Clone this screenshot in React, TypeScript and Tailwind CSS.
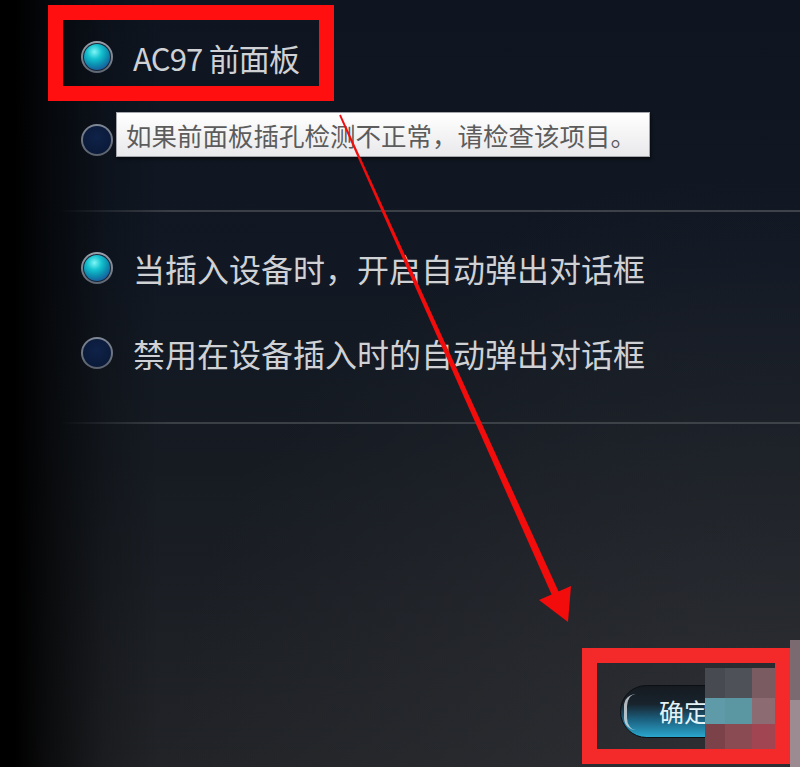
import React from "react";

const FONT = { fontFamily: '"Noto Sans CJK SC", "Noto Sans", sans-serif' };

function Radio({ checked }: { checked: boolean }) {
  if (checked) {
    return (
      <div className="w-[32px] h-[32px] rounded-full p-[2px] bg-[linear-gradient(180deg,#9aa2ad,#5d6673)] shrink-0">
        <div className="w-full h-full rounded-full p-[1px] bg-[#1a2535]">
          <div className="w-full h-full rounded-full bg-[radial-gradient(circle_at_40%_30%,#7ff7f7_0%,#14c2cf_30%,#0c8fb0_55%,#1c4e98_85%,#1b3d7a_100%)]" />
        </div>
      </div>
    );
  }
  return (
    <div className="w-[32px] h-[32px] rounded-full p-[2px] bg-[linear-gradient(180deg,#808896,#5a616c)] shrink-0">
      <div className="w-full h-full rounded-full bg-[radial-gradient(circle_at_50%_40%,#0f2248_0%,#0a1a3a_70%,#08142c_100%)]" />
    </div>
  );
}

function Row({
  checked,
  label,
  className,
  textClass,
}: {
  checked: boolean;
  label?: string;
  className?: string;
  textClass?: string;
}) {
  return (
    <div className={"flex items-center h-[40px] gap-[20px] " + (className ?? "")}>
      <Radio checked={checked} />
      {label ? (
        <span className={"leading-none text-[#cfd1d4] whitespace-nowrap " + (textClass ?? "text-[32px]")} style={FONT}>
          {label}
        </span>
      ) : null}
    </div>
  );
}

const mosaic: { x: number; y: number; w: number; h: number; c: string }[] = [
  { x: 705, y: 668, w: 20, h: 30, c: "#474b51" },
  { x: 725, y: 668, w: 27, h: 30, c: "#4e5258" },
  { x: 752, y: 668, w: 24, h: 30, c: "#7b5b62" },
  { x: 705, y: 698, w: 20, h: 26, c: "#5f9aa8" },
  { x: 725, y: 698, w: 27, h: 26, c: "#5b96a3" },
  { x: 752, y: 698, w: 24, h: 26, c: "#8d6b73" },
  { x: 705, y: 724, w: 20, h: 26, c: "#7b4249" },
  { x: 725, y: 724, w: 27, h: 26, c: "#8b4b53" },
  { x: 752, y: 724, w: 24, h: 26, c: "#a24552" },
  { x: 790, y: 640, w: 10, h: 60, c: "#7b6a6f" },
  { x: 790, y: 700, w: 10, h: 67, c: "#9c8b90" },
];

export default function App() {
  return (
    <div className="relative w-[800px] h-[767px] overflow-hidden bg-[linear-gradient(180deg,#0e1520_0%,#111823_35%,#161b22_60%,#1d2025_85%,#212327_100%)]" style={FONT}>
      {/* ambient light bottom right */}
      <div className="absolute inset-0 bg-[radial-gradient(ellipse_at_95%_100%,rgba(70,70,75,0.35),transparent_55%)]" />
      {/* left dark fade */}
      <div className="absolute inset-y-0 left-0 w-[160px] bg-[linear-gradient(90deg,#000_0%,#000_9%,rgba(0,0,0,0.65)_30%,rgba(0,0,0,0.2)_65%,transparent_100%)]" />

      {/* content */}
      <div className="relative flex flex-col pt-[37px] pl-[81px]">
        <Row checked label="AC97 前面板" textClass="text-[31px] tracking-[-0.8px]" />
        <Row checked={false} className="mt-[43px]" />
        <div className="mt-[50px] -ml-[21px] h-[2px] bg-[linear-gradient(90deg,transparent_0%,#3a3e45_15%,#3e434a_100%)]" />
        <Row checked label="当插入设备时，开启自动弹出对话框" className="mt-[36px]" />
        <Row checked={false} label="禁用在设备插入时的自动弹出对话框" className="mt-[45px]" />
        <div className="mt-[49px] -ml-[21px] h-[2px] bg-[linear-gradient(90deg,transparent_0%,#3a3e45_15%,#3e434a_100%)]" />
        <div className="flex justify-end mt-[261px] pr-[28px]">
          <div className="relative w-[152px] h-[53px] rounded-full bg-[linear-gradient(180deg,#151a20_0%,#18232c_35%,#1b5f7e_65%,#2aa6cc_100%)] border border-[#0c0f13] flex items-center pl-[38px]">
            <div className="absolute left-[3px] top-[8px] w-[12px] h-[36px] rounded-l-full border-l-[3px] border-[#d9dde2] opacity-80" />
            <span className="text-[25px] leading-none text-[#e3f2f6]">确定</span>
          </div>
        </div>
      </div>

      {/* tooltip */}
      <div className="absolute left-[116px] top-[112px] w-[534px] h-[45px] bg-[linear-gradient(180deg,#ffffff,#e9e9ec)] border border-[#a3a7ad] shadow-[1px_2px_3px_rgba(0,0,0,0.6)] flex items-center pl-[9px]">
        <span className="text-[25.5px] leading-none text-[#5c5c5c] whitespace-nowrap">如果前面板插孔检测不正常，请检查该项目。</span>
      </div>

      {/* mosaic */}
      {mosaic.map((m, i) => (
        <div
          key={i}
          className="absolute"
          style={{ left: m.x, top: m.y, width: m.w, height: m.h, background: m.c }}
        />
      ))}

      {/* annotation boxes */}
      <div className="absolute left-[48px] top-[5px] w-[286px] h-[96px] border-[15px] border-[#ff0f0f]" />
      <div className="absolute left-[582px] top-[648px] w-[208px] h-[116px] border-[15px] border-[#f42a2a]" />

      {/* arrow */}
      <svg className="absolute inset-0 pointer-events-none" width="800" height="767" viewBox="0 0 800 767">
        <polygon points="339.2,115.4 340.8,114.6 559.5,593.6 552.5,596.6" fill="#f20c0c" />
        <polygon points="568,622 539,600 571,586" fill="#f20c0c" />
      </svg>
    </div>
  );
}
